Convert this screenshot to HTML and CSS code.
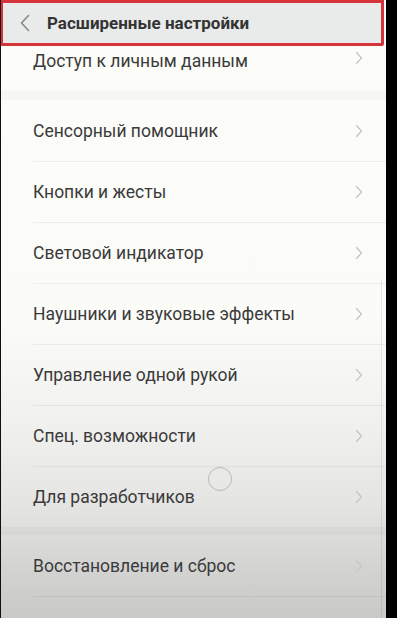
FILE: index.html
```html
<!DOCTYPE html>
<html lang="ru">
<head>
<meta charset="utf-8">
<link rel="stylesheet" href="styles.css">
</head>
<body>
<div class="frame">
  <div class="screen">
    <header class="header">
      <svg class="back" width="10" height="18" viewBox="0 0 10 18"><path d="M8.5 1.5 L1.5 9 L8.5 16.5" fill="none" stroke="#8a8a8a" stroke-width="1.6" stroke-linecap="round" stroke-linejoin="round"/></svg>
      <span class="title">Расширенные настройки</span>
    </header>
    <div class="list">
      <section class="group">
        <div class="row first"><span class="label">Доступ к личным данным</span><svg class="chev" width="8" height="14" viewBox="0 0 8 14"><path d="M1.5 1.5 L6.5 7 L1.5 12.5" fill="none" stroke="#c6c6c4" stroke-width="1.3" stroke-linecap="round" stroke-linejoin="round"/></svg></div>
      </section>
      <div class="gap"></div>
      <section class="group">
        <div class="row"><span class="label">Сенсорный помощник</span><svg class="chev" width="8" height="14" viewBox="0 0 8 14"><path d="M1.5 1.5 L6.5 7 L1.5 12.5" fill="none" stroke="#c6c6c4" stroke-width="1.3" stroke-linecap="round" stroke-linejoin="round"/></svg></div>
        <div class="row"><span class="label">Кнопки и жесты</span><svg class="chev" width="8" height="14" viewBox="0 0 8 14"><path d="M1.5 1.5 L6.5 7 L1.5 12.5" fill="none" stroke="#c6c6c4" stroke-width="1.3" stroke-linecap="round" stroke-linejoin="round"/></svg></div>
        <div class="row"><span class="label">Световой индикатор</span><svg class="chev" width="8" height="14" viewBox="0 0 8 14"><path d="M1.5 1.5 L6.5 7 L1.5 12.5" fill="none" stroke="#c6c6c4" stroke-width="1.3" stroke-linecap="round" stroke-linejoin="round"/></svg></div>
        <div class="row"><span class="label">Наушники и звуковые эффекты</span><svg class="chev" width="8" height="14" viewBox="0 0 8 14"><path d="M1.5 1.5 L6.5 7 L1.5 12.5" fill="none" stroke="#c6c6c4" stroke-width="1.3" stroke-linecap="round" stroke-linejoin="round"/></svg></div>
        <div class="row"><span class="label">Управление одной рукой</span><svg class="chev" width="8" height="14" viewBox="0 0 8 14"><path d="M1.5 1.5 L6.5 7 L1.5 12.5" fill="none" stroke="#c6c6c4" stroke-width="1.3" stroke-linecap="round" stroke-linejoin="round"/></svg></div>
        <div class="row"><span class="label">Спец. возможности</span><svg class="chev" width="8" height="14" viewBox="0 0 8 14"><path d="M1.5 1.5 L6.5 7 L1.5 12.5" fill="none" stroke="#c6c6c4" stroke-width="1.3" stroke-linecap="round" stroke-linejoin="round"/></svg></div>
        <div class="row"><span class="label">Для разработчиков</span><svg class="chev" width="8" height="14" viewBox="0 0 8 14"><path d="M1.5 1.5 L6.5 7 L1.5 12.5" fill="none" stroke="#c6c6c4" stroke-width="1.3" stroke-linecap="round" stroke-linejoin="round"/></svg></div>
      </section>
      <div class="gap gap-sm"></div>
      <section class="group">
        <div class="row"><span class="label">Восстановление и сброс</span><svg class="chev" width="8" height="14" viewBox="0 0 8 14"><path d="M1.5 1.5 L6.5 7 L1.5 12.5" fill="none" stroke="#c6c6c4" stroke-width="1.3" stroke-linecap="round" stroke-linejoin="round"/></svg></div>
        <div class="row"></div>
      </section>
      <div class="scrollbar"></div>
      <div class="touch"></div>
    </div>
  </div>
  <div class="edge"></div>
</div>
</body>
</html>
```

FILE: styles.css
```css
* { box-sizing: border-box; }
html, body { margin: 0; padding: 0; }
body { background: #000; font-family: Roboto, "Noto Sans", sans-serif; overflow: hidden; }
.frame { display: flex; width: 397px; height: 618px; }
.screen {
  width: 386px;
  height: 618px;
  display: flex;
  flex-direction: column;
  background: linear-gradient(to bottom, #fcfcf9 0%, #fbfbf8 52%, #f1f1ef 68%, #e4e4e3 82%, #d3d3d2 92%, #c9c9c8 100%);
  border-left: 1px solid #111;
  overflow: hidden;
}
.edge { flex: 1; background: #000; }
.header {
  height: 46px;
  flex: none;
  margin-left: -1px;
  width: 384px;
  display: flex;
  align-items: center;
  gap: 17px;
  padding-left: 17px;
  background: #e9eaea;
  border: 3px solid #d5343a;
  border-radius: 0 0 2px 2px;
}
.back { display: block; }
.title { font-weight: 700; font-size: 17px; color: #333; }
.list { position: relative; flex: 1; display: flex; flex-direction: column; }
.group { display: flex; flex-direction: column; }
.row {
  height: 61px;
  margin-left: 32px;
  padding-right: 23px;
  display: flex;
  align-items: center;
  justify-content: space-between;
  border-top: 1px solid rgba(0,0,0,0.05);
}
.row:first-child { border-top: none; }
.row.first { height: 44px; align-items: flex-start; padding-top: 5px; }
.label { font-size: 17.5px; color: #3a3a3a; }
.chev { display: block; }
.gap { height: 10px; flex: none; background: rgba(0,0,0,0.025); }
.gap-sm { height: 8px; }
.scrollbar { position: absolute; right: 4px; top: 234px; bottom: 0; width: 1px; background: rgba(0,0,0,0.08); }
.touch { position: absolute; left: 207px; top: 421px; width: 24px; height: 24px; border-radius: 50%; border: 1.5px solid #b8b8b8; }
```
